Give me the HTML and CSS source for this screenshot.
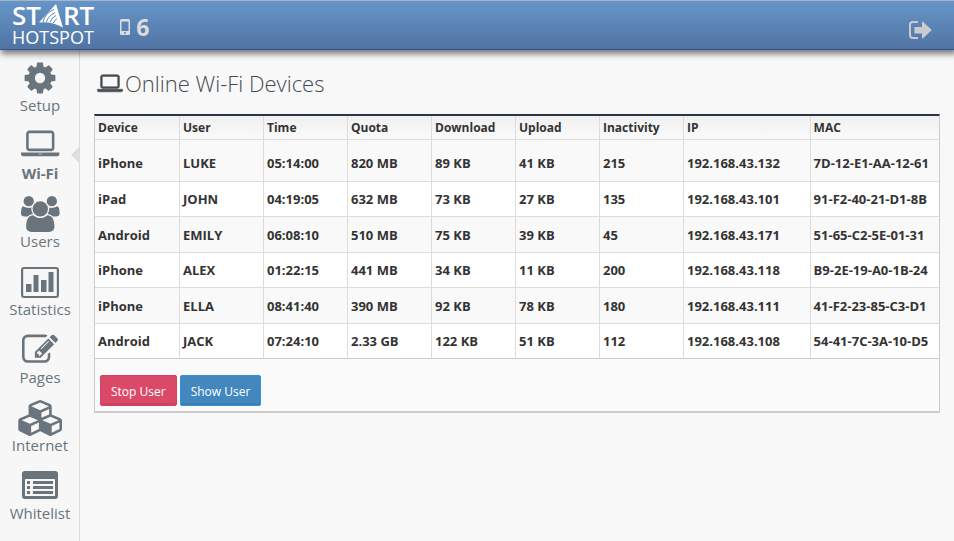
FILE: index.html
```html
<!DOCTYPE html>
<html lang="en">
<head>
    <meta charset="utf-8">
    <title>Start Hotspot - Online Wi-Fi Devices</title>
    <link rel="stylesheet" href="styles.css">
</head>
<body>
    <svg class="sprite" aria-hidden="true">
        <symbol id="icon-laptop" viewBox="0 0 1920 1792">
            <path d="M416 1152q-66 0-113-47t-47-113v-704q0-66 47-113t113-47h1088q66 0 113 47t47 113v704q0 66-47 113t-113 47h-1088zm-32-864v704q0 13 9.500 22.500t22.500 9.500h1088q13 0 22.500-9.500t9.500-22.500v-704q0-13-9.500-22.500t-22.500-9.500h-1088q-13 0-22.500 9.500t-9.500 22.500zm1376 928h160v96q0 40-47 68t-113 28h-1600q-66 0-113-28t-47-68v-96h1760zm-720 96q16 0 16-16t-16-16h-160q-16 0-16 16t16 16h160z"/>
        </symbol>
    </svg>

    <header class="topbar">
        <a class="logo" href="#">
            <span class="logo-top">ST<svg class="logo-mark" viewBox="0 0 25 24" aria-hidden="true">
                <path fill="#fff" d="M17 0L24 23.500Q12 17 0 18.500z"/>
                <path fill="none" stroke="#5a87ba" d="M4 18Q6 9 15 5.500M7.500 18Q9 12 16 8.500M11 18Q12.500 14 17 11.500M14.500 19Q15.500 16 18 14.500"/>
            </svg>RT</span>
            <span class="logo-bottom">HOTSPOT</span>
        </a>
        <div class="online">
            <svg class="online-icon" viewBox="0 0 10 16" aria-hidden="true">
                <path fill-rule="evenodd" d="M1.500 0h7Q10 0 10 1.500v13q0 1.500-1.500 1.500h-7Q0 16 0 14.500v-13Q0 0 1.500 0zM1.500 2.500v9.500h7v-9.500zM4 13.200v1.600h2v-1.600z"/>
            </svg>
            <span>6</span>
        </div>
        <a class="logout" href="#" aria-label="Log out">
            <svg viewBox="0 0 23 18" aria-hidden="true">
                <path fill="none" stroke="#c9cbce" stroke-width="2" d="M9 1H4Q1 1 1 4v10q0 3 3 3h5"/>
                <path fill="#c9cbce" d="M6 6h7V1.500q0-1.500 1.300-.5l8 7.500q.6.500 0 1l-8 7.500q-1.300 1-1.300-.5V12.500H6q-.6 0-.6-.6V6.600Q5.400 6 6 6z"/>
            </svg>
        </a>
    </header>

    <div class="layout">
        <nav class="sidebar">
            <a class="nav-item" href="#">
                <svg viewBox="0 0 1792 1792" aria-hidden="true"><path d="M1152 896q0-106-75-181t-181-75-181 75-75 181 75 181 181 75 181-75 75-181zm512-109v222q0 12-8 23t-20 13l-185 28q-19 54-39 91 35 50 107 138 10 12 10 25t-9 23q-27 37-99 108t-94 71q-12 0-26-9l-138-108q-44 23-91 38-16 136-29 186-7 28-36 28h-222q-14 0-24.500-8.500t-11.500-21.500l-28-184q-49-16-90-37l-141 107q-10 9-25 9-14 0-25-11-126-114-165-168-7-10-7-23 0-12 8-23 15-21 51-66.500t54-70.500q-27-50-41-99l-183-27q-13-2-21-12.500t-8-23.500v-222q0-12 8-23t19-13l186-28q14-46 39-92-40-57-107-138-10-12-10-24 0-10 9-23 26-36 98.500-107.500t94.500-71.500q13 0 26 10l138 107q44-23 91-38 16-136 29-186 7-28 36-28h222q14 0 24.500 8.500t11.500 21.500l28 184q49 16 90 37l142-107q9-9 24-9 13 0 25 10 129 119 165 170 7 8 7 22 0 12-8 23-15 21-51 66.500t-54 70.500q26 50 41 98l183 28q13 2 21 12.500t8 23.500z"/></svg>
                <span>Setup</span>
            </a>
            <a class="nav-item active" href="#">
                <svg viewBox="0 0 1920 1792" aria-hidden="true"><use href="#icon-laptop"/></svg>
                <span>Wi-Fi</span>
            </a>
            <a class="nav-item" href="#">
                <svg viewBox="-64 0 1920 1792" aria-hidden="true"><path d="M529 896q-162 5-265 128h-134q-82 0-138-40.500t-56-118.500q0-353 124-353 6 0 43.500 21t97.500 42.500 119 21.500q67 0 133-23-5 37-5 66 0 139 81 256zm1071 637q0 120-73 189.500t-194 69.500h-874q-121 0-194-69.500t-73-189.500q0-53 3.500-103.500t14-109 26.500-108.500 43-97.500 62-81 85.500-53.500 111.500-20q10 0 43 21.500t73 48 107 48 135 21.500 135-21.500 107-48 73-48 43-21.500q61 0 111.500 20t85.500 53.500 62 81 43 97.500 26.500 108.500 14 109 3.500 103.500zm-1024-1277q0 106-75 181t-181 75-181-75-75-181 75-181 181-75 181 75 75 181zm704 384q0 159-112.500 271.500t-271.500 112.500-271.500-112.500-112.500-271.500 112.500-271.500 271.500-112.500 271.500 112.500 112.500 271.500zm576 225q0 78-56 118.500t-138 40.500h-134q-103-123-265-128 81-117 81-256 0-29-5-66 66 23 133 23 59 0 119-21.500t97.500-42.500 43.500-21q124 0 124 353zm-128-609q0 106-75 181t-181 75-181-75-75-181 75-181 181-75 181 75 75 181z"/></svg>
                <span>Users</span>
            </a>
            <a class="nav-item" href="#">
                <svg viewBox="0 0 38 36" aria-hidden="true"><path fill-rule="evenodd" d="M3 3h32q3 0 3 3v25q0 3-3 3H3q-3 0-3-3V6q0-3 3-3zM3 5q-.8 0-.8.800v25.400q0 .800.800.800h32q.800 0 .800-.800V5.800q0-.800-.800-.800zM5 20h5.500v8H5zM12.500 11h5v17h-5zM20 16h5.500v12H20zM27.500 8h5v20h-5z"/></svg>
                <span>Statistics</span>
            </a>
            <a class="nav-item" href="#">
                <svg viewBox="0 0 1792 1792" aria-hidden="true"><path d="M888 1184l116-116-152-152-116 116v56h96v96h56zm440-720q-16-16-33 1l-350 350q-17 17-1 33t33-1l350-350q17-17 1-33zm80 594v190q0 119-84.500 203.500t-203.500 84.500h-832q-119 0-203.500-84.500t-84.500-203.500v-832q0-119 84.500-203.500t203.500-84.500h832q63 0 117 25 15 7 18 23 3 17-9 29l-49 49q-14 14-32 8-23-6-45-6h-832q-66 0-113 47t-47 113v832q0 66 47 113t113 47h832q66 0 113-47t47-113v-126q0-13 9-22l64-64q15-15 35-7t20 29zm-96-738l288 288-672 672h-288v-288zm444 132l-92 92-288-288 92-92q28-28 68-28t68 28l152 152q28 28 28 68t-28 68z"/></svg>
                <span>Pages</span>
            </a>
            <a class="nav-item" href="#">
                <svg viewBox="-64 0 2304 1792" aria-hidden="true"><path d="M640 1632l384-192v-314l-384 164v342zm-64-454l404-173-404-173-404 173zm1088 454l384-192v-314l-384 164v342zm-64-454l404-173-404-173-404 173zm-448-293l384-165v-266l-384 164v267zm-64-379l441-189-441-189-441 189zm1088 518v416q0 36-19 67t-52 47l-448 224q-25 14-57 14t-57-14l-448-224q-4-2-7-4-2 2-7 4l-448 224q-25 14-57 14t-57-14l-448-224q-33-16-52-47t-19-67v-416q0-38 21.500-70t56.500-48l434-186v-400q0-38 21.500-70t56.500-48l448-192q23-10 50-10t50 10l448 192q35 16 56.500 48t21.500 70v400l434 186q36 16 57 48t21 70z"/></svg>
                <span>Internet</span>
            </a>
            <a class="nav-item" href="#">
                <svg viewBox="0 0 36 36" aria-hidden="true"><path fill-rule="evenodd" d="M3 3h30q3 0 3 3v22q0 3-3 3H3q-3 0-3-3V6q0-3 3-3zM3 11v17h30V11zM5 13h3v3H5zM5 18h3v3H5zM5 23h3v3H5zM11 13h20v3H11zM11 18h20v3H11zM11 23h20v3H11z"/></svg>
                <span>Whitelist</span>
            </a>
        </nav>

        <main class="content">
            <h1>
                <svg class="title-icon" viewBox="0 0 1920 1792" aria-hidden="true"><use href="#icon-laptop"/></svg>
                Online Wi-Fi Devices
            </h1>

            <div class="panel">
                <table class="devices">
                    <colgroup>
                        <col class="col" span="7">
                        <col class="col-ip">
                        <col>
                    </colgroup>
                    <thead>
                        <tr>
                            <th>Device</th>
                            <th>User</th>
                            <th>Time</th>
                            <th>Quota</th>
                            <th>Download</th>
                            <th>Upload</th>
                            <th>Inactivity</th>
                            <th>IP</th>
                            <th>MAC</th>
                        </tr>
                    </thead>
                    <tbody>
                        <tr><td>iPhone</td><td>LUKE</td><td>05:14:00</td><td>820 MB</td><td>89 KB</td><td>41 KB</td><td>215</td><td>192.168.43.132</td><td>7D-12-E1-AA-12-61</td></tr>
                        <tr><td>iPad</td><td>JOHN</td><td>04:19:05</td><td>632 MB</td><td>73 KB</td><td>27 KB</td><td>135</td><td>192.168.43.101</td><td>91-F2-40-21-D1-8B</td></tr>
                        <tr><td>Android</td><td>EMILY</td><td>06:08:10</td><td>510 MB</td><td>75 KB</td><td>39 KB</td><td>45</td><td>192.168.43.171</td><td>51-65-C2-5E-01-31</td></tr>
                        <tr><td>iPhone</td><td>ALEX</td><td>01:22:15</td><td>441 MB</td><td>34 KB</td><td>11 KB</td><td>200</td><td>192.168.43.118</td><td>B9-2E-19-A0-1B-24</td></tr>
                        <tr><td>iPhone</td><td>ELLA</td><td>08:41:40</td><td>390 MB</td><td>92 KB</td><td>78 KB</td><td>180</td><td>192.168.43.111</td><td>41-F2-23-85-C3-D1</td></tr>
                        <tr><td>Android</td><td>JACK</td><td>07:24:10</td><td>2.33 GB</td><td>122 KB</td><td>51 KB</td><td>112</td><td>192.168.43.108</td><td>54-41-7C-3A-10-D5</td></tr>
                    </tbody>
                </table>
                <div class="actions">
                    <button type="button" class="btn btn-stop">Stop User</button>
                    <button type="button" class="btn btn-show">Show User</button>
                </div>
            </div>
        </main>
    </div>
</body>
</html>
```
FILE: styles.css
```css
* { box-sizing: border-box; }
body { margin: 0; min-height: 100vh; display: flex; flex-direction: column; background: #f8f8f8; color: #333; font-family: "Open Sans", Arial, sans-serif; font-size: 13px; }
a { color: inherit; text-decoration: none; }
.sprite { display: none; }

.topbar { position: relative; z-index: 1; height: 50px; display: flex; padding: 0 22px 0 12px; background: linear-gradient(#6795c8, #5074a4); border-top: 1px solid #a5b5c8; border-bottom: 1px solid #34558b; box-shadow: 2px 3px 6px 1px rgba(0, 0, 0, 0.5); }
.logo { display: flex; flex-direction: column; color: #fff; }
.logo-top { display: flex; height: 27px; font-size: 26px; font-weight: 600; line-height: 28px; }
.logo-mark { width: 25px; height: 24px; margin: 3px -1px 0 -2px; }
.logo-bottom { font-size: 18px; font-weight: 500; line-height: 18px; }
.online { display: flex; align-items: center; gap: 6px; margin-left: 26px; padding-top: 3px; color: #dcdcdc; font-size: 23px; font-weight: 700; }
.online-icon { width: 10px; height: 16px; fill: #dcdcdc; }
.logout { margin-left: auto; padding-top: 20px; }
.logout svg { display: block; width: 23px; height: 18px; }

.layout { flex: 1; display: flex; }
.sidebar { width: 80px; padding: 10px 0 0 1px; background: #f7f7f7; border-right: 1px solid #ddd; }
.nav-item { position: relative; display: flex; flex-direction: column; align-items: center; gap: 2px; padding-bottom: 16px; color: #69747c; font-size: 15px; line-height: 14px; }
.nav-item svg { height: 36px; fill: #69747c; overflow: visible; }
.nav-item.active { font-weight: 700; }
.nav-item.active::after { content: ""; position: absolute; right: 0; top: 19px; border: 8px solid transparent; border-right-color: #ddd; border-left: 0; }

.content { flex: 1; padding: 18px 14px 20px; }
h1 { display: flex; align-items: center; gap: 2px; margin: 0 0 16px; padding-left: 3px; color: #444b50; font-size: 22px; font-weight: 300; line-height: 30px; }
.title-icon { width: 26px; height: 24px; margin-top: 4px; fill: #444b50; stroke: #444b50; stroke-width: 40; overflow: visible; }

.panel { background: #fafafa; border: 1px solid #ccc; border-top: 2px solid #2b3544; border-bottom-width: 2px; }
.devices { width: 100%; table-layout: fixed; border-collapse: separate; border-spacing: 0; }
.col { width: 84px; }
.col-ip { width: 15%; }
th { height: 24px; padding: 0 3px; text-align: left; font-size: 12px; font-weight: 700; background: linear-gradient(#f0f0f0, #fafafa); border-bottom: 1px solid #ddd; }
td { height: 36px; padding: 0 3px; font-weight: 700; white-space: nowrap; border-bottom: 1px solid #ddd; }
th + th, td + td { border-left: 1px solid #ddd; }
tbody tr:nth-child(odd) { background: #f9f9f9; }
tbody tr:nth-child(even) { background: #fff; }
tbody tr:nth-child(even) td { height: 35px; }
tbody tr:first-child td { height: 42px; padding-top: 4px; }
tbody tr:last-child td { border-bottom-color: #ccc; }

.actions { display: flex; gap: 3px; padding: 16px 5px 5px; }
.btn { height: 31px; padding: 2px 10px 0; color: #fff; font-family: inherit; font-size: 12px; border: 1px solid; border-radius: 2px; cursor: pointer; }
.btn-stop { background: #da4a68; border-color: #d04461; box-shadow: inset 0 -2px #cb4560; }
.btn-show { background: #4387bf; border-color: #358fdc; box-shadow: inset 0 -2px #3d7db3; }
```
